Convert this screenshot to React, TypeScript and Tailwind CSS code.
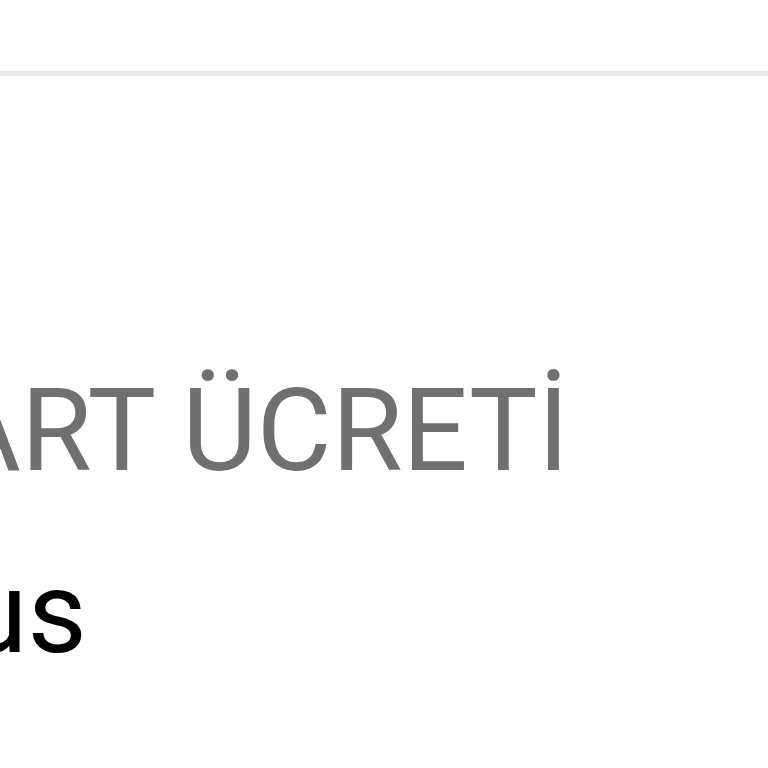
export default function App() {
  return (
    <div className="w-[768px] h-[768px] overflow-hidden bg-white font-['Roboto',sans-serif]">
      <div className="h-[71px]" />
      <div className="h-[5px] bg-[#ebebeb]" />
      <div className="pt-[297px]">
        <div className="ml-[-54px] whitespace-nowrap text-[115px] leading-none text-[#707070]">
          ART ÜCRETİ
        </div>
        <div className="mt-[67px] ml-[-36px] whitespace-nowrap text-[115px] leading-none text-black">
          us
        </div>
      </div>
    </div>
  );
}
